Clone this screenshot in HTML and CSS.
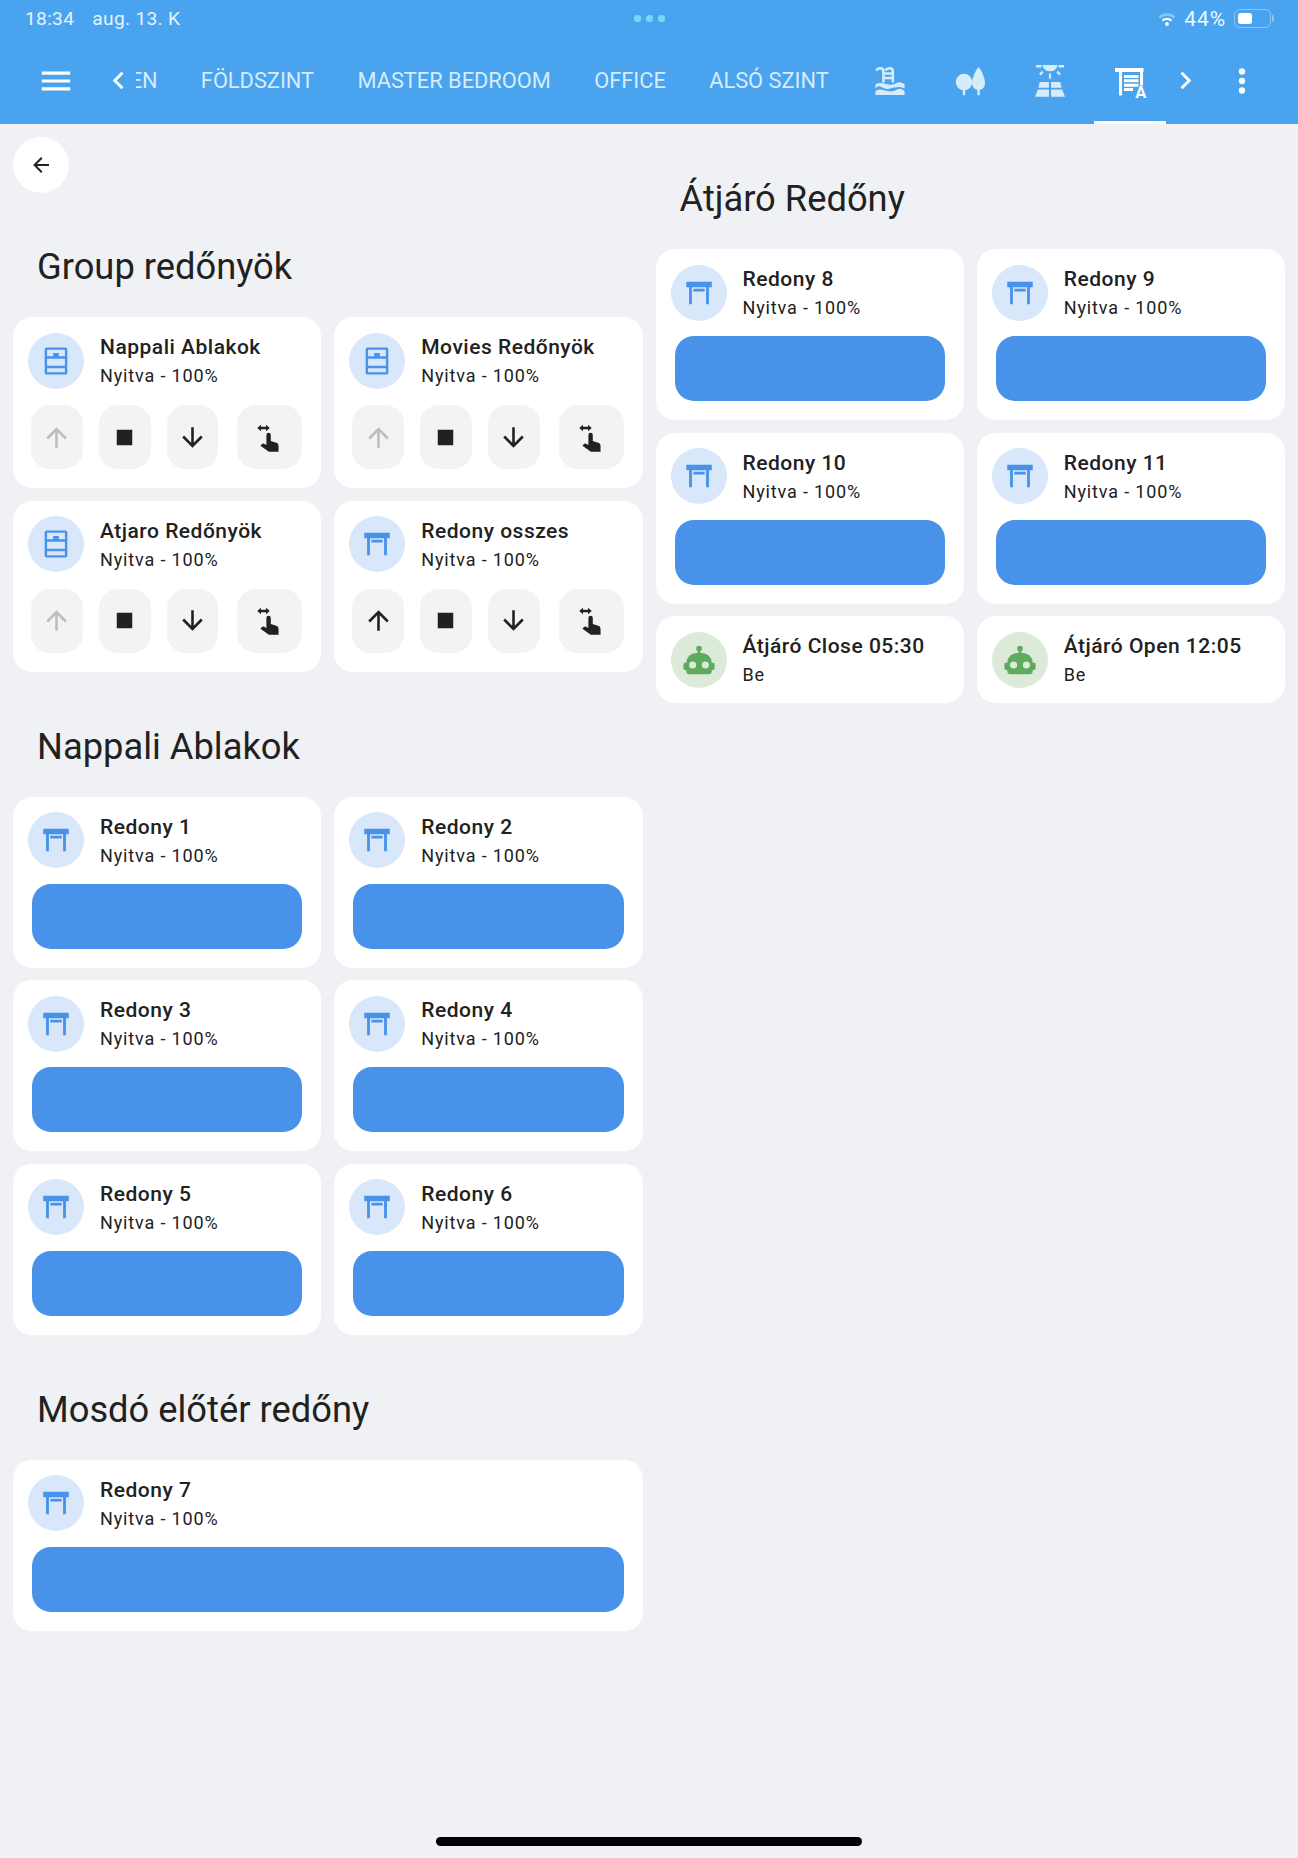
FILE: index.html
```html
<!DOCTYPE html>
<html lang="en">
<head>
    <meta charset="UTF-8">
    <meta name="viewport" content="width=device-width, initial-scale=1.0">
    <title>Redőnyök</title>
    <link rel="stylesheet" href="styles.css">
</head>
<body>
    <svg class="defs" aria-hidden="true">
        <symbol id="i-shutter" viewBox="0 0 24 24"><path d="M3 4H21V8H19V20H17V8H7V20H5V8H3V4M8 9H16V11H8V9Z"/></symbol>
        <symbol id="i-dresser" viewBox="0 0 24 24"><path fill-rule="evenodd" d="M5.3 2.4H18.7A1.3 1.3 0 0 1 20 3.7V20.3A1.3 1.3 0 0 1 18.7 21.6H5.3A1.3 1.3 0 0 1 4 20.3V3.7A1.3 1.3 0 0 1 5.3 2.4ZM5.7 4.1V8.6H10V6.4H14V8.6H18.3V4.1ZM5.7 10.4V15.4H18.3V10.4ZM5.7 17.2V19.9H18.3V17.2Z"/></symbol>
        <symbol id="i-up" viewBox="0 0 24 24"><path d="M13,20H11V8L5.5,13.5L4.08,12.08L12,4.16L19.92,12.08L18.5,13.5L13,8V20Z"/></symbol>
        <symbol id="i-down" viewBox="0 0 24 24"><path d="M11,4H13V16L18.5,10.5L19.92,11.92L12,19.84L4.08,11.92L5.5,10.5L11,16V4Z"/></symbol>
        <symbol id="i-stop" viewBox="0 0 24 24"><path d="M18,18H6V6H18V18Z"/></symbol>
        <symbol id="i-hand" viewBox="0 0 24 24"><path d="M2.5 4.6L5.4 2.1V3.6H9.3V2.1L12.2 4.6L9.3 7.1V5.6H5.4V7.1ZM9.6 10A1.7 1.7 0 0 1 13 10V14.8L17.3 16Q19 16.5 19 18.4V23H11.5L5 18.4L6 17.2Q6.8 16.4 7.8 16.9L9.6 17.9Z"/></symbol>
        <symbol id="i-robot" viewBox="0 0 24 24"><path d="M12,2A2,2 0 0,1 14,4C14,4.74 13.6,5.39 13,5.73V7H14A7,7 0 0,1 21,14H22A1,1 0 0,1 23,15V18A1,1 0 0,1 22,19H21V20A2,2 0 0,1 19,22H5A2,2 0 0,1 3,20V19H2A1,1 0 0,1 1,18V15A1,1 0 0,1 2,14H3A7,7 0 0,1 10,7H11V5.73C10.4,5.39 10,4.74 10,4A2,2 0 0,1 12,2M7.5,13A2.5,2.5 0 0,0 5,15.5A2.5,2.5 0 0,0 7.5,18A2.5,2.5 0 0,0 10,15.5A2.5,2.5 0 0,0 7.5,13M16.5,13A2.5,2.5 0 0,0 14,15.5A2.5,2.5 0 0,0 16.5,18A2.5,2.5 0 0,0 19,15.5A2.5,2.5 0 0,0 16.5,13Z"/></symbol>
    </svg>

    <header class="topbar">
        <div class="statusbar">
            <div class="status-left"><span>18:34</span><span>aug. 13. K</span></div>
            <div class="status-dots"><i></i><i></i><i></i></div>
            <div class="status-right">
                <svg class="wifi" viewBox="0 0 18 16">
                    <path class="wifi-outer" d="M1.5 6.5A11 11 0 0 1 16.5 6.5" />
                    <path class="wifi-inner" d="M4.6 9.6A6.4 6.4 0 0 1 13.4 9.6" />
                    <circle cx="9" cy="13" r="1.9" fill="#fff" />
                </svg>
                <span>44%</span>
                <div class="battery"><div class="battery-fill"></div></div>
                <div class="battery-nub"></div>
            </div>
        </div>

        <nav class="toolbar">
            <svg class="menu-icon" viewBox="0 0 24 24"><path d="M3,6H21V8H3V6M3,11H21V13H3V11M3,16H21V18H3V16Z"/></svg>
            <svg class="chevron" viewBox="0 0 24 24"><path d="M15.41,16.58L10.83,12L15.41,7.41L14,6L8,12L14,18L15.41,16.58Z"/></svg>
            <div class="tabs">
                <a class="tab tab-clipped">EN</a>
                <a class="tab">FÖLDSZINT</a>
                <a class="tab">MASTER BEDROOM</a>
                <a class="tab">OFFICE</a>
                <a class="tab">ALSÓ SZINT</a>
                <a class="tab tab-icon">
                    <svg viewBox="0 0 24 24">
                        <path class="line" d="M2.8 5Q3.6 3.5 5.4 3.5Q7.6 3.5 7.6 5.6V13M9 5Q9.8 3.5 11.7 3.5Q13.9 3.5 13.9 5.6V13M7.6 7H13.9M7.6 10H13.9"/>
                        <path d="M2.3 14.2Q4.5 13 6.6 13.4T11.4 14.4T16.4 13.4T21.7 14.2V17Q19 15.8 16.4 16.1T11.4 17.1T6.6 16.1T2.3 17ZM2.3 18.6Q4.5 17.4 6.6 17.8T11.4 18.8T16.4 17.8T21.7 18.6V21.3H2.3Z"/>
                    </svg>
                </a>
                <a class="tab tab-icon">
                    <svg viewBox="0 0 24 24">
                        <circle cx="8" cy="12.7" r="5.5"/>
                        <path d="M7.2 14H8.8V21.5H7.2ZM17.7 2.7C20 5.5 22 10 22 13.5C22 16 20.5 17.5 18.5 17.8V21.5H16.9V17.8C14.9 17.5 13.4 16 13.4 13.5C13.4 10 15.4 5.5 17.7 2.7Z"/>
                    </svg>
                </a>
                <a class="tab tab-icon">
                    <svg viewBox="0 0 24 24">
                        <path d="M7 1.3H17A5 4.2 0 0 1 7 1.3ZM2.7 1.4H6.3V3H2.7ZM17.7 1.4H21.3V3H17.7ZM11.3 7H12.7V10.5H11.3ZM4.7 7.2L6.7 5.2L7.8 6.3L5.8 8.3ZM19.3 7.2L17.3 5.2L16.2 6.3L18.2 8.3Z"/>
                        <path d="M5.2 12.7H11.3V16.5H4.2ZM12.7 12.7H18.8L19.8 16.5H12.7ZM3.9 17.7H11.3V22.5H2ZM12.7 17.7H20.1L22 22.5H12.7Z"/>
                    </svg>
                </a>
                <a class="tab tab-icon tab-active">
                    <svg viewBox="0 0 24 24">
                        <path d="M2 3.3H21V6H20.7V15H18.7V6H6.7V21.7H4.7V6H2ZM8 8H17.7V10H8ZM8 10.9H17.7V12.9H8ZM8 13.8H17.7V15.8H8ZM8 16.7H14V18.7H8Z"/>
                    </svg>
                    <span class="icon-letter">A</span>
                </a>
            </div>
            <svg class="chevron" viewBox="0 0 24 24"><path d="M8.59,16.58L13.17,12L8.59,7.41L10,6L16,12L10,18L8.59,16.58Z"/></svg>
            <svg class="more-icon" viewBox="0 0 24 24"><path d="M12,16A2,2 0 0,1 14,18A2,2 0 0,1 12,20A2,2 0 0,1 10,18A2,2 0 0,1 12,16M12,10A2,2 0 0,1 14,12A2,2 0 0,1 12,14A2,2 0 0,1 10,12A2,2 0 0,1 12,10M12,4A2,2 0 0,1 14,6A2,2 0 0,1 12,8A2,2 0 0,1 10,6A2,2 0 0,1 12,4Z"/></svg>
        </nav>
    </header>

    <main class="columns">
        <div class="column">
            <button class="back-btn" type="button">
                <svg viewBox="0 0 24 24"><path d="M20,11V13H8L13.5,18.5L12.08,19.92L4.16,12L12.08,4.08L13.5,5.5L8,11H20Z"/></svg>
            </button>

            <section class="section">
                <h2>Group redőnyök</h2>
                <div class="tiles">
                    <div class="tile">
                        <div class="tile-head">
                            <div class="tile-icon"><svg><use href="#i-dresser"/></svg></div>
                            <div><div class="tile-name">Nappali Ablakok</div><div class="tile-state">Nyitva - 100%</div></div>
                        </div>
                        <div class="controls">
                            <button class="ctl ctl-off" type="button"><svg><use href="#i-up"/></svg></button>
                            <button class="ctl" type="button"><svg><use href="#i-stop"/></svg></button>
                            <button class="ctl" type="button"><svg><use href="#i-down"/></svg></button>
                            <button class="ctl ctl-wide" type="button"><svg><use href="#i-hand"/></svg></button>
                        </div>
                    </div>
                    <div class="tile">
                        <div class="tile-head">
                            <div class="tile-icon"><svg><use href="#i-dresser"/></svg></div>
                            <div><div class="tile-name">Movies Redőnyök</div><div class="tile-state">Nyitva - 100%</div></div>
                        </div>
                        <div class="controls">
                            <button class="ctl ctl-off" type="button"><svg><use href="#i-up"/></svg></button>
                            <button class="ctl" type="button"><svg><use href="#i-stop"/></svg></button>
                            <button class="ctl" type="button"><svg><use href="#i-down"/></svg></button>
                            <button class="ctl ctl-wide" type="button"><svg><use href="#i-hand"/></svg></button>
                        </div>
                    </div>
                    <div class="tile">
                        <div class="tile-head">
                            <div class="tile-icon"><svg><use href="#i-dresser"/></svg></div>
                            <div><div class="tile-name">Atjaro Redőnyök</div><div class="tile-state">Nyitva - 100%</div></div>
                        </div>
                        <div class="controls">
                            <button class="ctl ctl-off" type="button"><svg><use href="#i-up"/></svg></button>
                            <button class="ctl" type="button"><svg><use href="#i-stop"/></svg></button>
                            <button class="ctl" type="button"><svg><use href="#i-down"/></svg></button>
                            <button class="ctl ctl-wide" type="button"><svg><use href="#i-hand"/></svg></button>
                        </div>
                    </div>
                    <div class="tile">
                        <div class="tile-head">
                            <div class="tile-icon"><svg><use href="#i-shutter"/></svg></div>
                            <div><div class="tile-name">Redony osszes</div><div class="tile-state">Nyitva - 100%</div></div>
                        </div>
                        <div class="controls">
                            <button class="ctl" type="button"><svg><use href="#i-up"/></svg></button>
                            <button class="ctl" type="button"><svg><use href="#i-stop"/></svg></button>
                            <button class="ctl" type="button"><svg><use href="#i-down"/></svg></button>
                            <button class="ctl ctl-wide" type="button"><svg><use href="#i-hand"/></svg></button>
                        </div>
                    </div>
                </div>
            </section>

            <section class="section">
                <h2>Nappali Ablakok</h2>
                <div class="tiles">
                    <div class="tile">
                        <div class="tile-head">
                            <div class="tile-icon"><svg><use href="#i-shutter"/></svg></div>
                            <div><div class="tile-name">Redony 1</div><div class="tile-state">Nyitva - 100%</div></div>
                        </div>
                        <div class="slider"></div>
                    </div>
                    <div class="tile">
                        <div class="tile-head">
                            <div class="tile-icon"><svg><use href="#i-shutter"/></svg></div>
                            <div><div class="tile-name">Redony 2</div><div class="tile-state">Nyitva - 100%</div></div>
                        </div>
                        <div class="slider"></div>
                    </div>
                    <div class="tile">
                        <div class="tile-head">
                            <div class="tile-icon"><svg><use href="#i-shutter"/></svg></div>
                            <div><div class="tile-name">Redony 3</div><div class="tile-state">Nyitva - 100%</div></div>
                        </div>
                        <div class="slider"></div>
                    </div>
                    <div class="tile">
                        <div class="tile-head">
                            <div class="tile-icon"><svg><use href="#i-shutter"/></svg></div>
                            <div><div class="tile-name">Redony 4</div><div class="tile-state">Nyitva - 100%</div></div>
                        </div>
                        <div class="slider"></div>
                    </div>
                    <div class="tile">
                        <div class="tile-head">
                            <div class="tile-icon"><svg><use href="#i-shutter"/></svg></div>
                            <div><div class="tile-name">Redony 5</div><div class="tile-state">Nyitva - 100%</div></div>
                        </div>
                        <div class="slider"></div>
                    </div>
                    <div class="tile">
                        <div class="tile-head">
                            <div class="tile-icon"><svg><use href="#i-shutter"/></svg></div>
                            <div><div class="tile-name">Redony 6</div><div class="tile-state">Nyitva - 100%</div></div>
                        </div>
                        <div class="slider"></div>
                    </div>
                </div>
            </section>

            <section class="section">
                <h2>Mosdó előtér redőny</h2>
                <div class="tiles">
                    <div class="tile tile-full">
                        <div class="tile-head">
                            <div class="tile-icon"><svg><use href="#i-shutter"/></svg></div>
                            <div><div class="tile-name">Redony 7</div><div class="tile-state">Nyitva - 100%</div></div>
                        </div>
                        <div class="slider"></div>
                    </div>
                </div>
            </section>
        </div>

        <div class="column">
            <section class="section">
                <h2>Átjáró Redőny</h2>
                <div class="tiles">
                    <div class="tile">
                        <div class="tile-head">
                            <div class="tile-icon"><svg><use href="#i-shutter"/></svg></div>
                            <div><div class="tile-name">Redony 8</div><div class="tile-state">Nyitva - 100%</div></div>
                        </div>
                        <div class="slider"></div>
                    </div>
                    <div class="tile">
                        <div class="tile-head">
                            <div class="tile-icon"><svg><use href="#i-shutter"/></svg></div>
                            <div><div class="tile-name">Redony 9</div><div class="tile-state">Nyitva - 100%</div></div>
                        </div>
                        <div class="slider"></div>
                    </div>
                    <div class="tile">
                        <div class="tile-head">
                            <div class="tile-icon"><svg><use href="#i-shutter"/></svg></div>
                            <div><div class="tile-name">Redony 10</div><div class="tile-state">Nyitva - 100%</div></div>
                        </div>
                        <div class="slider"></div>
                    </div>
                    <div class="tile">
                        <div class="tile-head">
                            <div class="tile-icon"><svg><use href="#i-shutter"/></svg></div>
                            <div><div class="tile-name">Redony 11</div><div class="tile-state">Nyitva - 100%</div></div>
                        </div>
                        <div class="slider"></div>
                    </div>
                    <div class="tile">
                        <div class="tile-head">
                            <div class="tile-icon tile-icon-green"><svg><use href="#i-robot"/></svg></div>
                            <div><div class="tile-name">Átjáró Close 05:30</div><div class="tile-state">Be</div></div>
                        </div>
                    </div>
                    <div class="tile">
                        <div class="tile-head">
                            <div class="tile-icon tile-icon-green"><svg><use href="#i-robot"/></svg></div>
                            <div><div class="tile-name">Átjáró Open 12:05</div><div class="tile-state">Be</div></div>
                        </div>
                    </div>
                </div>
            </section>
        </div>
    </main>

    <div class="home-bar"></div>
</body>
</html>
```
FILE: styles.css
```css
* {
    box-sizing: border-box;
}
html, body {
    margin: 0;
    height: 1858px;
}
body {
    position: relative;
    background: #f0f1f5;
    color: #212121;
    font-family: Roboto, "Liberation Sans", sans-serif;
    overflow: hidden;
}
.defs {
    display: none;
}

/* top bar */
.topbar {
    height: 124px;
    background: #4aa3ee;
    color: #fff;
}
.statusbar {
    display: grid;
    grid-template-columns: 1fr auto 1fr;
    align-items: center;
    height: 37px;
    padding: 0 24px 0 25px;
}
.status-left {
    display: flex;
    gap: 18px;
    font-size: 19.2px;
    letter-spacing: 0.3px;
    color: #e4f3fd;
}
.status-dots {
    display: flex;
    gap: 5.5px;
}
.status-dots i {
    width: 6.5px;
    height: 6.5px;
    border-radius: 50%;
    background: #7ad6f7;
}
.status-right {
    display: flex;
    align-items: center;
    justify-content: flex-end;
    font-size: 21px;
    letter-spacing: 0.9px;
    color: #f1f9fe;
}
.wifi {
    width: 18px;
    height: 16px;
    margin-right: 8px;
    fill: none;
}
.wifi-outer {
    stroke: #8cc6f5;
    stroke-width: 2.6;
}
.wifi-inner {
    stroke: #fff;
    stroke-width: 2.4;
}
.battery {
    width: 37px;
    height: 19px;
    margin-left: 8px;
    padding: 3px;
    border: 1.5px solid #8cc6f5;
    border-radius: 6px;
}
.battery-fill {
    width: 14px;
    height: 100%;
    background: #fff;
    border-radius: 2.5px;
}
.battery-nub {
    width: 2px;
    height: 7px;
    margin-left: 1px;
    background: #8cc6f5;
    border-radius: 0 2px 2px 0;
}

.toolbar {
    display: flex;
    align-items: center;
    height: 87px;
    padding: 0 37px;
}
.toolbar svg {
    fill: currentColor;
    flex: none;
}
.menu-icon {
    width: 38px;
    height: 38px;
    margin-right: 25.5px;
}
.chevron {
    width: 35px;
    height: 35px;
}
.more-icon {
    width: 38px;
    height: 38px;
    margin-left: 20px;
}
.tabs {
    display: flex;
    flex: 1;
    align-self: stretch;
    min-width: 0;
    overflow: hidden;
}
.tab {
    position: relative;
    display: flex;
    flex: none;
    align-items: center;
    padding: 0 21.7px;
    font-size: 21.8px;
    color: #d6ecfb;
    white-space: nowrap;
}
.tab-clipped {
    margin-left: -27.5px;
    padding-right: 21.5px;
}
.tab-icon {
    padding: 0 22px;
}
.tab-icon svg {
    width: 36px;
    height: 36px;
}
.tab .line {
    fill: none;
    stroke: currentColor;
    stroke-width: 1.7;
}
.tab-active {
    color: #fff;
}
.tab-active::after {
    content: "";
    position: absolute;
    left: 4px;
    right: 4px;
    bottom: 0;
    height: 3px;
    background: #fff;
}
.icon-letter {
    position: absolute;
    left: 45px;
    top: 50px;
    font-size: 16.5px;
    font-weight: 700;
    line-height: 12px;
}

/* page columns */
.columns {
    display: grid;
    grid-template-columns: 1fr 1fr;
    column-gap: 13px;
    padding: 0 13px;
}
.back-btn {
    display: flex;
    align-items: center;
    justify-content: center;
    width: 56px;
    height: 56px;
    margin: 13px 0 -1px;
    padding: 0;
    border: 0;
    border-radius: 50%;
    background: #fff;
}
.back-btn svg {
    width: 24px;
    height: 24px;
    fill: #212121;
}
.section {
    margin-top: 55px;
}
.section h2 {
    margin: 0;
    padding: 0 24px 30px;
    font-size: 36.3px;
    font-weight: 400;
    line-height: 40px;
}
.tiles {
    display: grid;
    grid-template-columns: 1fr 1fr;
    gap: 12.6px 13px;
}
.tile {
    background: #fff;
    border-radius: 19px;
}
.tile-full {
    grid-column: 1 / -1;
}
.tile-head {
    display: flex;
    align-items: center;
    gap: 16px;
    height: 87px;
    padding: 2px 15px 0;
}
.tile-icon {
    display: flex;
    align-items: center;
    justify-content: center;
    flex: none;
    width: 56px;
    height: 56px;
    margin-top: -2px;
    border-radius: 50%;
    background: #d8e7fa;
    color: #4892e9;
}
.tile-icon svg {
    width: 34px;
    height: 34px;
    fill: currentColor;
}
.tile-icon-green {
    background: #dcebd9;
    color: #5cab5e;
}
.tile-name {
    font-size: 21px;
    font-weight: 500;
    line-height: 28px;
    letter-spacing: 0.5px;
}
.tile-state {
    font-size: 18px;
    line-height: 28px;
    letter-spacing: 0.85px;
    margin-top: 1px;
}
.slider {
    height: 65px;
    margin: 0 19px 19px;
    background: #4892e9;
    border-radius: 19px;
}
.controls {
    display: flex;
    gap: 16px;
    padding: 1px 19px 19px 18px;
}
.ctl {
    display: flex;
    align-items: center;
    justify-content: center;
    flex: 1;
    height: 64px;
    padding: 0;
    border: 0;
    border-radius: 19px;
    background: #f3f3f3;
    color: #212121;
}
.ctl svg {
    width: 31px;
    height: 31px;
    fill: currentColor;
}
.ctl-wide {
    flex: none;
    width: 65px;
    margin-left: 3px;
}
.ctl-off {
    color: #bdbdbd;
}

.home-bar {
    position: absolute;
    left: 436px;
    bottom: 12px;
    width: 426px;
    height: 9px;
    border-radius: 5px;
    background: #000;
}
```
